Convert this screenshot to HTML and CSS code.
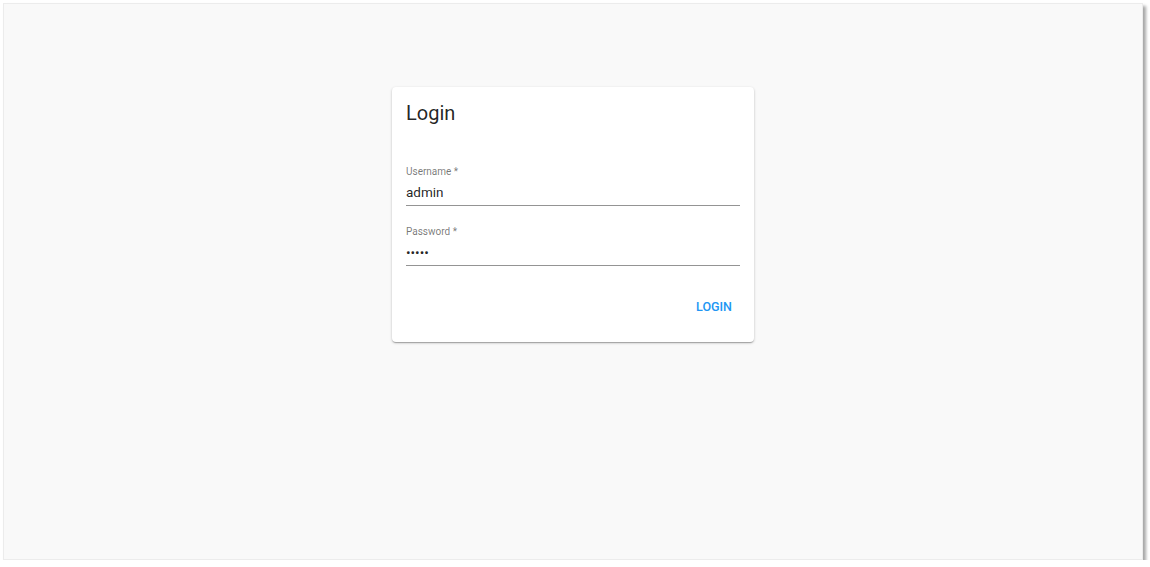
FILE: index.html
```html
<!DOCTYPE html>
<html lang="en">
<head>
    <meta charset="utf-8">
    <meta name="viewport" content="width=device-width, initial-scale=1.0">
    <title>Login</title>
    <link rel="stylesheet" href="styles.css">
</head>
<body>
    <div class="window">
        <div class="card">
            <h1 class="card-title">Login</h1>
            <form class="login-form" onsubmit="return false">
                <div class="field">
                    <label for="username">Username *</label>
                    <input id="username" type="text" value="admin" readonly>
                </div>
                <div class="field">
                    <label for="password">Password *</label>
                    <input id="password" type="password" value="admin" readonly>
                </div>
                <div class="actions">
                    <button type="submit" class="btn-login">Login</button>
                </div>
            </form>
        </div>
    </div>
</body>
</html>
```

FILE: styles.css
```css
html, body {
    margin: 0;
    padding: 0;
    background-color: #fff;
    font-family: 'Roboto', 'Liberation Sans', sans-serif;
}
.window {
    box-sizing: border-box;
    margin: 3px 0 0 3px;
    width: 1140px;
    height: 557px;
    background-color: #f9f9f9;
    border: 1px solid #ececec;
    box-shadow: 3px 3px 3px rgba(0, 0, 0, 0.35);
    padding-top: 83px;
}
.card {
    box-sizing: border-box;
    width: 362px;
    margin: 0 auto;
    background-color: #fff;
    border-radius: 4px;
    box-shadow: 0 1px 3px rgba(0, 0, 0, 0.2), 0 1px 1px rgba(0, 0, 0, 0.14), 0 2px 1px -1px rgba(0, 0, 0, 0.12);
    padding: 14px 14px 18px;
}
.card-title {
    margin: 0;
    font-size: 20px;
    line-height: 24px;
    font-weight: 400;
    color: rgba(0, 0, 0, 0.87);
}
.login-form {
    margin-top: 40px;
}
.field {
    display: flex;
    flex-direction: column;
    margin-bottom: 19px;
}
.field label {
    font-size: 10px;
    line-height: 14px;
    color: rgba(0, 0, 0, 0.54);
}
.field input {
    margin-top: 2px;
    padding: 1px 0 3px;
    border: none;
    border-bottom: 1px solid rgba(0, 0, 0, 0.42);
    font-family: inherit;
    font-size: 13.5px;
    line-height: 20px;
    height: 20px;
    box-sizing: content-box;
    color: rgba(0, 0, 0, 0.87);
    background: transparent;
    outline: none;
}
.actions {
    display: flex;
    justify-content: flex-end;
    padding-top: 3px;
}
.btn-login {
    height: 36px;
    padding: 0 8px;
    border: none;
    background: none;
    font-family: inherit;
    font-size: 12.5px;
    font-weight: 500;
    letter-spacing: 0;
    text-transform: uppercase;
    color: #2196f3;
    cursor: pointer;
}
```
